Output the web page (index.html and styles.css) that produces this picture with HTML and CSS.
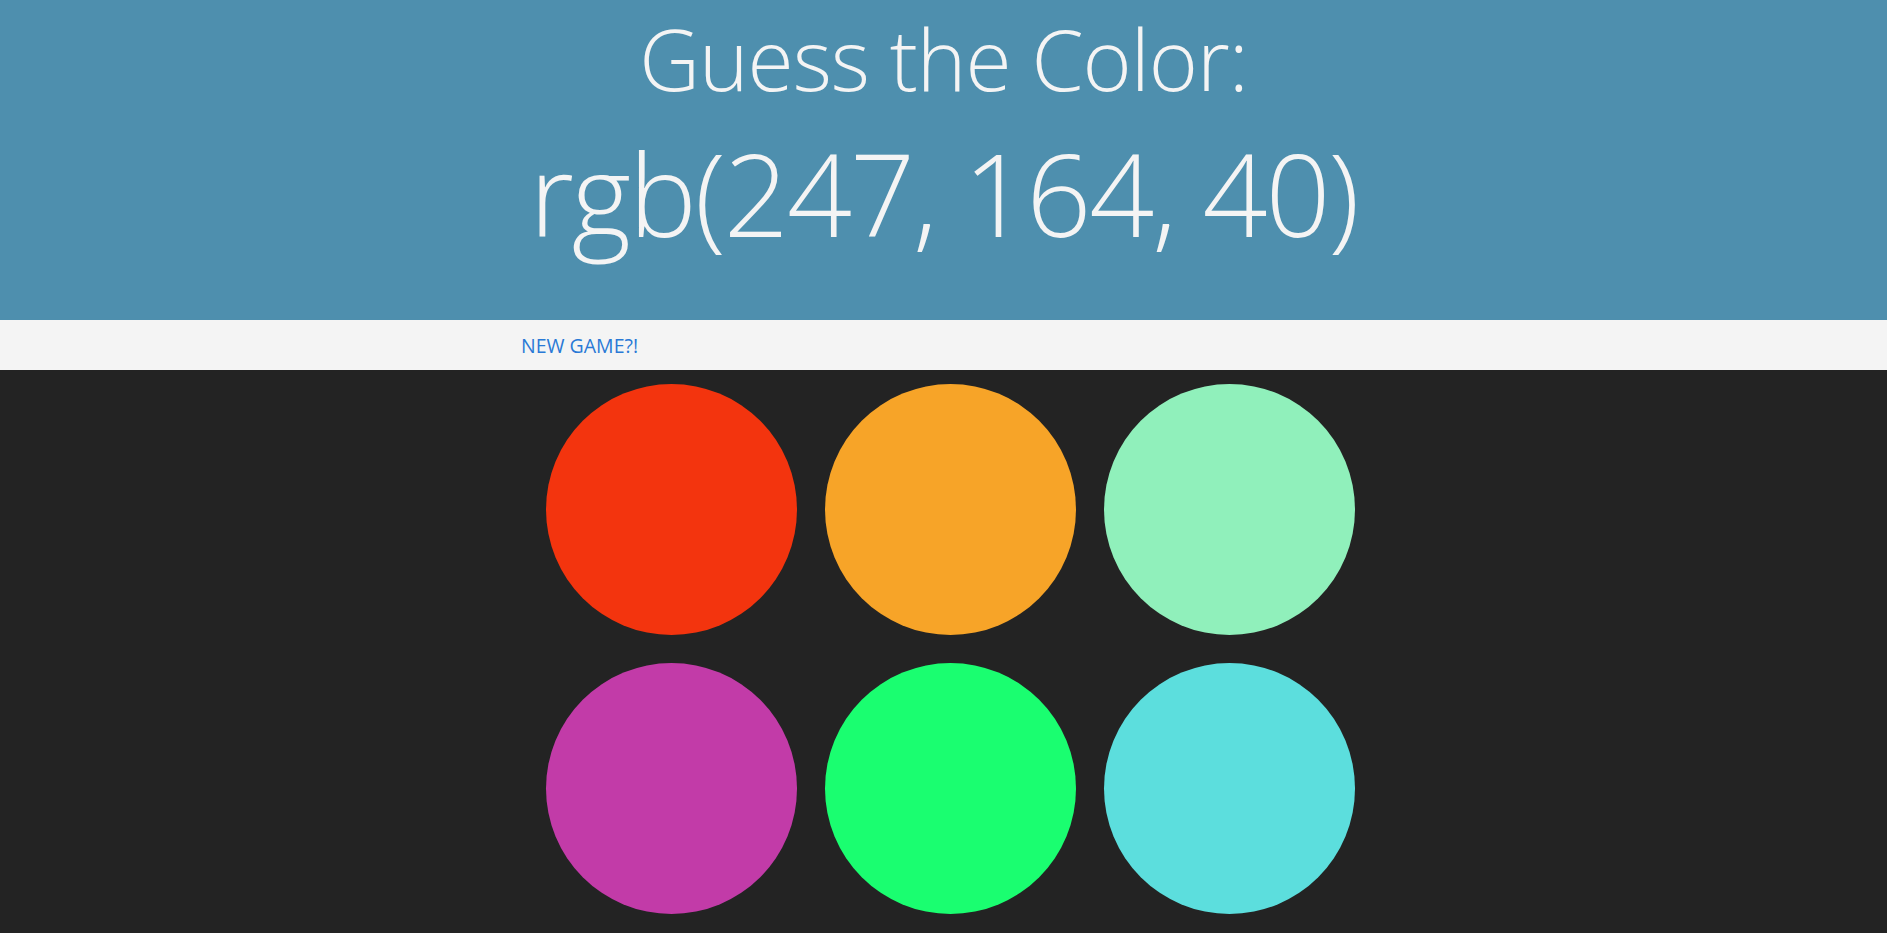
FILE: index.html
```html
<!DOCTYPE html>
<html>
<head>
<meta charset="utf-8">
<title>Guess the Color</title>
<link rel="stylesheet" href="styles.css">
</head>
<body>
<header class="header">
  <h1 class="title">
    <span class="title-line">Guess the Color:</span>
    <span class="title-rgb">rgb(247, 164, 40)</span>
  </h1>
</header>
<div class="stripe">
  <div class="stripe-inner">
    <button class="new-game">NEW GAME?!</button>
  </div>
</div>
<main class="board">
  <div class="square sq-red"></div>
  <div class="square sq-orange"></div>
  <div class="square sq-mint"></div>
  <div class="square sq-purple"></div>
  <div class="square sq-green"></div>
  <div class="square sq-cyan"></div>
</main>
</body>
</html>
```
FILE: styles.css
```css
html, body {
  margin: 0;
  padding: 0;
}
body {
  background: #232323;
  font-family: "Open Sans", "Liberation Sans", sans-serif;
}
.header {
  background: #4e8fae;
  height: 320px;
  box-sizing: border-box;
  padding-top: 4px;
}
.title {
  margin: 0;
  font-weight: 300;
  color: #f4f4f4;
  text-align: center;
  display: flex;
  flex-direction: column;
  align-items: center;
}
.title-line {
  font-size: 84px;
  line-height: 110px;
  letter-spacing: -1px;
}
.title-rgb {
  font-size: 114px;
  line-height: 150px;
  letter-spacing: -2px;
  padding-top: 4px;
}
.stripe {
  background: #f4f4f4;
  height: 50px;
}
.stripe-inner {
  width: 837px;
  margin: 0 auto;
  height: 100%;
  display: flex;
  align-items: center;
}
.new-game {
  background: none;
  border: none;
  padding: 0;
  margin-left: -4px;
  color: #2979d6;
  font-family: "Open Sans", "Liberation Sans", sans-serif;
  font-size: 19.5px;
  font-weight: 400;
  cursor: pointer;
}
.board {
  width: 837px;
  margin-left: calc(50% - 412px);
  padding-top: 14px;
  display: flex;
  flex-wrap: wrap;
  justify-content: center;
  gap: 28px;
}
.square {
  width: 251px;
  height: 251px;
  border-radius: 50%;
}
.sq-red { background: #f3340e; }
.sq-orange { background: #f7a428; }
.sq-mint { background: #90f0bb; }
.sq-purple { background: #c23ba8; }
.sq-green { background: #1afe70; }
.sq-cyan { background: #5cdedd; }
```
